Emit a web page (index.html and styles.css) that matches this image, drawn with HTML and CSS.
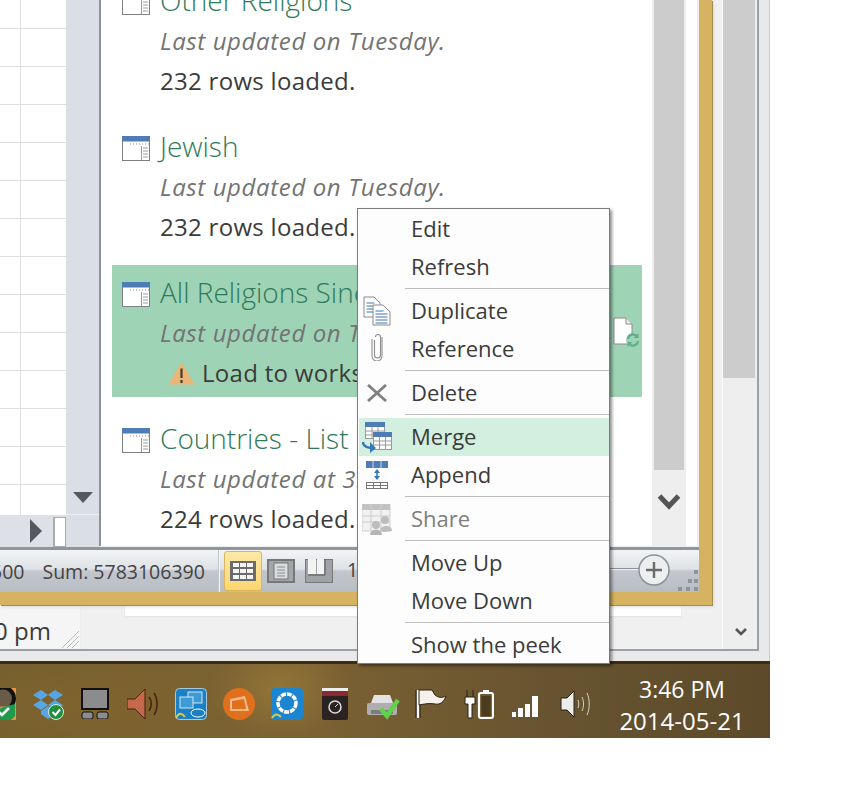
FILE: index.html
```html
<!DOCTYPE html>
<html lang="en">
<head>
<meta charset="utf-8">
<title>Queries</title>
<link rel="stylesheet" href="styles.css">
</head>
<body>
<svg class="defs" width="0" height="0" aria-hidden="true">
  <defs>
    <symbol id="tbl" viewBox="0 0 28 25">
      <rect x=".5" y=".5" width="27" height="24" fill="#fff" stroke="#7f7f7f"/>
      <rect width="28" height="5.5" fill="#4f7cb5"/>
      <path d="M8 8h1m2 0h1m2 0h1m2 0h1m2 0h1m2 0h1m2 0h1" stroke="#8a8a8a" fill="none"/>
      <path d="M19.5 10v14M21 12h5M21 15h5M21 18h5M21 21h5" stroke="#9a9a9a" fill="none"/>
    </symbol>
  </defs>
</svg>
<div class="screen">
  <div class="workspace">
    <div class="back-window">
      <div class="doc">
        <div class="doc-foot">
          <div class="doc-left">
            <span class="doc-time">0 pm</span>
            <svg class="grip-lines" width="19" height="18" viewBox="0 0 19 18"><path d="M1 18 18 1M6 18 18 6M11 18 18 11" stroke="#b9b9b9" fill="none"/></svg>
          </div>
          <div class="paper"></div>
        </div>
      </div>
      <div class="back-scroll">
        <div class="back-thumb"></div>
        <svg class="back-chev" width="14" height="10" viewBox="0 0 14 10"><path d="M2 2l5 5 5-5" stroke="#555" stroke-width="2.6" fill="none"/></svg>
      </div>
    </div>
    <div class="front-window">
      <div class="content">
        <div class="left">
          <div class="left-top">
            <div class="grid"></div>
            <div class="vscroll"><div class="tri-down"></div></div>
          </div>
          <div class="hscroll"><div class="tri-right"></div><div class="hthumb"></div><div class="corner"></div></div>
        </div>
        <div class="pane">
          <div class="list">
            <div class="item">
              <div class="title"><svg class="tbl"><use href="#tbl"/></svg>Other Religions</div>
              <div class="sub">Last updated on Tuesday.</div>
              <div class="rows">232 rows loaded.</div>
            </div>
            <div class="item">
              <div class="title"><svg class="tbl"><use href="#tbl"/></svg>Jewish</div>
              <div class="sub">Last updated on Tuesday.</div>
              <div class="rows">232 rows loaded.</div>
            </div>
            <div class="item selected">
              <div class="title"><svg class="tbl"><use href="#tbl"/></svg>All Religions Since 1945</div>
              <div class="sub">Last updated on Tuesday.</div>
              <div class="rows warn">
                <svg class="warn-icon" width="27" height="24" viewBox="0 0 27 24"><path d="M13.5 1 26.5 23.5H.5z" fill="#e9b676"/><path d="M13.5 7.5v9.5M13.5 19v3" stroke="#4a3a28" stroke-width="2.2"/></svg>
                Load to worksheet
              </div>
              <svg class="file-icon" width="28" height="30" viewBox="0 0 28 30">
                <path d="M1 1h12l6 6v20H1z" fill="#fff" stroke="#8a8a8a"/>
                <path d="M13 1v6h6" fill="#f2f2f2" stroke="#8a8a8a"/>
                <circle cx="20" cy="23" r="7" fill="#9fd3b6"/>
                <path d="M15 22a5 5 0 0 1 9-2.500M25 24a5 5 0 0 1-9 2.500" stroke="#5fae8c" stroke-width="2.200" fill="none"/>
                <path d="M25.500 16v5h-5zM14.500 30v-5h5z" fill="#5fae8c"/>
              </svg>
            </div>
            <div class="item">
              <div class="title"><svg class="tbl"><use href="#tbl"/></svg>Countries - List</div>
              <div class="sub">Last updated at 3:46 PM.</div>
              <div class="rows">224 rows loaded.</div>
            </div>
          </div>
          <div class="pane-scroll">
            <div class="pane-thumb"></div>
            <svg class="pane-chev" width="24" height="20" viewBox="0 0 24 20"><path d="M2.500 3 12 13 21.500 3" stroke="#555" stroke-width="5" fill="none"/></svg>
          </div>
          <div class="pane-edge"></div>
        </div>
      </div>
      <div class="statusbar">
        <span class="st-avg">500</span>
        <span class="st-sum">Sum: 5783106390</span>
        <span class="st-div"></span>
        <span class="view active">
          <svg width="26" height="20" viewBox="0 0 26 20"><rect width="26" height="20" fill="#6b6b6b"/><path d="M3 2h6v4H3zM10 2h6v4h-6zM17 2h6v4h-6zM3 8h6v4H3zM10 8h6v4h-6zM17 8h6v4h-6zM3 14h6v4H3zM10 14h6v4h-6zM17 14h6v4h-6z" fill="#f4f4f4"/></svg>
        </span>
        <span class="view">
          <svg width="28" height="24" viewBox="0 0 28 24"><rect x="1" y="1" width="26" height="22" fill="#a2a6ab" stroke="#777" stroke-width="2"/><rect x="7" y="4" width="14" height="16" fill="#d9dce0" stroke="#777"/><path d="M10 8h8M10 11h8M10 14h8M10 17h8" stroke="#8b8b8b"/></svg>
        </span>
        <span class="view">
          <svg width="28" height="24" viewBox="0 0 28 24"><rect x=".5" y=".5" width="27" height="23" fill="#9fa3a8" stroke="#777"/><rect x="3" y="0" width="8" height="15" fill="#f3f3f3"/><rect x="12" y="0" width="7" height="15" fill="#f3f3f3"/><path d="M3 16h17V0" fill="none" stroke="#555"/></svg>
        </span>
        <span class="st-zoom">100%</span>
        <span class="zoom-line"></span>
        <span class="zoom-plus">
          <svg width="32" height="32" viewBox="0 0 32 32"><circle cx="16" cy="16" r="15" fill="#eceef0" stroke="#8d9298" stroke-width="1.500"/><path d="M16 8v16M8 16h16" stroke="#6b6b6b" stroke-width="2.400"/></svg>
        </span>
        <svg class="st-grip" width="22" height="22" viewBox="0 0 22 22"><path d="M17 0h4v4h-4zM11 9h4v4h-4zM17 9h4v4h-4zM1 17h4v4H1zM9 17h4v4H9zM17 17h4v4h-4z" fill="#8e949b"/></svg>
      </div>
    </div>
    <div class="menu">
      <div class="mi"><span class="mi-ic"></span><span class="mi-t">Edit</span></div>
      <div class="mi"><span class="mi-ic"></span><span class="mi-t">Refresh</span></div>
      <div class="sep"></div>
      <div class="mi"><span class="mi-ic">
        <svg width="28" height="30" viewBox="0 0 28 30"><path d="M1 1h10l6 6v14H1z" fill="#fff" stroke="#8a8a8a"/><path d="M3.500 7h8M3.500 10h10M3.500 13h10M3.500 16h10" stroke="#3f74ad"/><path d="M10 9h10l7 7v13H10z" fill="#fff" stroke="#8a8a8a"/><path d="M12.500 15h8M12.500 18h12M12.500 21h12M12.500 24h12M12.500 27h12" stroke="#3f74ad"/></svg>
      </span><span class="mi-t">Duplicate</span></div>
      <div class="mi"><span class="mi-ic mi-up">
        <svg width="12" height="28" viewBox="0 0 12 28"><path d="M3.500 7v15a3 3 0 0 0 6 0V4a2.500 2.500 0 0 0-5 0M1 6v17a5 5 0 0 0 10 0V4" stroke="#8e8e8e" stroke-width="1.100" fill="none"/></svg>
      </span><span class="mi-t">Reference</span></div>
      <div class="sep"></div>
      <div class="mi"><span class="mi-ic">
        <svg width="20" height="18" viewBox="0 0 20 18"><path d="M1 1l18 16M19 1 1 17" stroke="#808080" stroke-width="2.800" fill="none"/></svg>
      </span><span class="mi-t">Delete</span></div>
      <div class="sep"></div>
      <div class="mi hot"><span class="mi-ic">
        <svg width="30" height="31" viewBox="0 0 30 31"><g stroke="#9a9a9a" fill="#fff"><rect x="3.500" y=".5" width="19" height="16"/><path d="M3.500 9h19M3.500 13h19M10 5v12M16 5v12" fill="none"/><rect x="11.500" y="10.500" width="18" height="17"/><path d="M11.500 19h18M11.500 23h18M17.500 15v12M23.500 15v12" fill="none"/></g><rect x="3" width="20" height="5" fill="#4f7cb5"/><rect x="11" y="10" width="19" height="5" fill="#4f7cb5"/><path d="M1 20c0 5 4 6 10 6" stroke="#3878b4" stroke-width="2.400" fill="none"/><path d="M8 20l6 6-6 5z" fill="#3878b4"/></svg>
      </span><span class="mi-t">Merge</span></div>
      <div class="mi"><span class="mi-ic">
        <svg width="22" height="28" viewBox="0 0 22 28"><rect width="22" height="7" fill="#4f7cb5"/><path d="M7 0v7M15 0v7" stroke="#fff" stroke-width=".7"/><rect x=".5" y="21.500" width="21" height="6" fill="#fff" stroke="#777"/><path d="M0 24.500h22M7.500 21v7M14.500 21v7" stroke="#777"/><path d="M11 9v9" stroke="#3878b4" stroke-width="1.600"/><path d="M8 12l3-4 3 4zM8 15l3 4 3-4z" fill="#3878b4"/></svg>
      </span><span class="mi-t">Append</span></div>
      <div class="sep"></div>
      <div class="mi off"><span class="mi-ic">
        <svg width="30" height="31" viewBox="0 0 30 31"><rect width="28" height="27" fill="#f1f1f1" stroke="#d0d0d0"/><rect width="28" height="6" fill="#c2c2c2"/><path d="M0 12h28M0 18h28M9 0v27M19 0v27" stroke="#cdcdcd"/><circle cx="23" cy="16" r="4" fill="#bdbdbd"/><circle cx="14" cy="21" r="4" fill="#bdbdbd"/><path d="M8 31c0-7 12-7 12 0z" fill="#b5b5b5"/><path d="M18 26c1-5 12-6 12 1l-9 1z" fill="#bdbdbd"/></svg>
      </span><span class="mi-t">Share</span></div>
      <div class="sep"></div>
      <div class="mi"><span class="mi-ic"></span><span class="mi-t">Move Up</span></div>
      <div class="mi"><span class="mi-ic"></span><span class="mi-t">Move Down</span></div>
      <div class="sep"></div>
      <div class="mi"><span class="mi-ic"></span><span class="mi-t">Show the peek</span></div>
    </div>
  </div>
  <div class="taskbar">
    <div class="tray">
      <svg class="t0" width="16" height="32" viewBox="0 0 16 32"><rect x="-4" width="20" height="32" fill="#e8953a"/><path d="M-4 19a11 11 0 1 1 15-1" stroke="#111" stroke-width="4" fill="#6a5a48"/><path d="M-4 32V22l8-3 11-3v12l-4 4z" fill="#1f9a4d"/><path d="M-1 24l3 3 7-7" stroke="#fff" stroke-width="2.500" fill="none"/></svg>
      <svg class="t1" width="32" height="30" viewBox="0 0 32 30"><path d="M9 0l7 5-7 5-8-5zM23 0l8 5-8 5-7-5zM1 15l8-5 7 5-7 5zM31 15l-8-5-7 5 7 5zM9 21l7-5 7 5v3l-7 5-7-5z" fill="#58a5e3"/><circle cx="24" cy="22" r="7.500" fill="#1f8f3f" stroke="#d8efdd"/><path d="M20.500 22l3 3 4.500-5.500" stroke="#fff" stroke-width="2" fill="none"/></svg>
      <svg class="t2" width="28" height="31" viewBox="0 0 28 31"><rect x="1" y="1" width="26" height="20" fill="#8c8c8c" stroke="#111" stroke-width="2"/><rect x="1" y="24" width="11" height="7" rx="2" fill="#8c8c8c" stroke="#111"/><rect x="16" y="24" width="11" height="7" rx="2" fill="#8c8c8c" stroke="#111"/></svg>
      <svg class="t3" width="31" height="32" viewBox="0 0 31 32"><path d="M0 11h8L18 1v30L8 21H0z" fill="#c4694a" stroke="#45200f"/><path d="M22 9c3 4 3 10 0 14M27 5c4 6 4 16 0 22" stroke="#4a2410" stroke-width="1.600" fill="none"/></svg>
      <svg class="t4" width="32" height="32" viewBox="0 0 32 32"><rect x=".5" y=".5" width="31" height="31" rx="4" fill="#1b80c4" stroke="#a8c8dc"/><rect x="13" y="4" width="14" height="11" fill="#3d9ad4" stroke="#cfe6f3"/><rect x="5" y="9" width="13" height="11" fill="#3d9ad4" stroke="#cfe6f3"/><path d="M1 30c3-6 6-5 9-1" stroke="#e7c83c" stroke-width="2" fill="none"/><ellipse cx="23" cy="25" rx="7" ry="4" fill="none" stroke="#fff"/></svg>
      <svg class="t5" width="32" height="32" viewBox="0 0 32 32"><circle cx="16" cy="16" r="16" fill="#e0701c"/><path d="M7 11l15-3 4 15H7z" fill="#f4b98b"/><path d="M9 13l12-2 2 10H9z" fill="#e0701c"/></svg>
      <svg class="t6" width="32" height="32" viewBox="0 0 32 32"><rect width="32" height="32" rx="4" fill="#1b86cf"/><circle cx="16" cy="15" r="9" fill="none" stroke="#fff" stroke-width="3.500" stroke-dasharray="5 1"/><path d="M1 30c3-5 6-4 9-1" stroke="#d9c84a" stroke-width="2" fill="none"/></svg>
      <svg class="t7" width="26" height="32" viewBox="0 0 26 32"><rect width="26" height="32" rx="2" fill="#2b2222"/><rect width="26" height="3" fill="#eee"/><rect y="3" width="26" height="5" fill="#8a2a34"/><circle cx="13" cy="19" r="6" fill="none" stroke="#ddd" stroke-width="1.500"/><path d="M13 19l3-3" stroke="#ddd"/></svg>
      <svg class="t8" width="33" height="26" viewBox="0 0 33 26"><path d="M7 0h16l3 8H4z" fill="#e2e2e2"/><rect y="8" width="30" height="12" rx="2" fill="#aeaeae"/><rect x="4" y="15" width="22" height="4" fill="#7c7c7c"/><path d="M14 14l6 7 11-16" stroke="#5fd24a" stroke-width="4.500" fill="none"/></svg>
      <svg class="t9" width="32" height="30" viewBox="0 0 32 30"><path d="M3 1v28" stroke="#2a2112" stroke-width="5"/><path d="M3 1v28" stroke="#fff" stroke-width="2.500"/><path d="M4 1h13l3 5c4 3 7 3 11 1-2 6-6 9-11 8-5-1-11 0-16 1z" fill="#f4f1ea" stroke="#2a2112"/></svg>
      <svg class="t10" width="30" height="30" viewBox="0 0 30 30"><path d="M3 1v7M9 1v7M1 8h10v7H8v14H4V15H1z" fill="#fff" stroke="#2a2112" stroke-width="1"/><rect x="15" y="4" width="14" height="25" rx="2" fill="none" stroke="#fff" stroke-width="2.200"/><rect x="19" y="1" width="6" height="3" fill="#fff"/><rect x="17.500" y="7" width="9" height="20" fill="#4c3c1e"/></svg>
      <svg class="t11" width="31" height="22" viewBox="0 0 31 22"><path d="M1 17h4v5H1zM7 13h5v9H7zM14 9h5v13h-5zM21 1h6v21h-6z" fill="#fff"/></svg>
      <svg class="t12" width="32" height="30" viewBox="0 0 32 30"><path d="M1 9h6L14 2v26l-7-7H1z" fill="#ededed" stroke="#2a2112"/><path d="M18 11c1 2 1 6 0 8M22 8c2 4 2 10 0 14M27 4c3 7 3 15 0 22" stroke="#d8d3c6" fill="none"/></svg>
    </div>
    <div class="clock"><div class="clock-time">3:46 PM</div><div class="clock-date">2014-05-21</div></div>
  </div>
</div>
</body>
</html>
```

FILE: styles.css
```css
* { box-sizing: border-box; }
html, body { margin: 0; padding: 0; background: #fff; }
body { width: 841px; height: 802px; overflow: hidden; font-family: "Open Sans", "Liberation Sans", sans-serif; color: #3b3b3b; }
.defs { position: absolute; }
.screen { width: 770px; height: 738px; display: flex; flex-direction: column; position: relative; }

.workspace { height: 661px; background: #e9e9e9; border-right: 1px solid #ccc; position: relative; flex: none; }
.back-window { width: 759px; height: 651px; display: flex; border-right: 2px solid #9aa0a8; border-bottom: 2px solid #9aa0a8; }
.doc { width: 723px; padding-top: 605px; background: #f0f0f0; border-right: 1px solid #fff; }
.doc-foot { display: flex; height: 44px; }
.doc-left { width: 81px; background: #f5f5f5; position: relative; overflow: hidden; border-right: 1px solid #ececec; }
.doc-time { position: absolute; left: -6px; top: 11px; font-size: 24px; line-height: 30px; white-space: nowrap; }
.grip-lines { position: absolute; right: 0; bottom: 1px; }
.paper { width: 556px; height: 11px; margin-left: 44px; background: #fff; box-shadow: 0 1px 2px #e2e2e2; }
.back-scroll { width: 34px; background: #eee; position: relative; }
.back-thumb { width: 32px; height: 378px; background: #ccc; margin-left: 0; }
.back-chev { position: absolute; left: 11px; top: 627px; }

.front-window { position: absolute; left: 0; top: 0; width: 712px; height: 605px; border-right: 13px solid #d5b360; border-bottom: 13px solid #d5b360; box-shadow: 1px 1px 0 #a68b4c, 2px 2px 3px #ddd; display: flex; flex-direction: column; }
.content { height: 547px; display: flex; flex: none; }
.left { width: 99px; flex: none; display: flex; flex-direction: column; }
.left-top { flex: 1; display: flex; min-height: 0; }
.grid { flex: 1; background-color: #fff; background-image: linear-gradient(#dedede, #dedede), linear-gradient(to bottom, transparent 27px, #dedede 27px, #dedede 28px, transparent 28px); background-size: 1px 100%, 100% 38px; background-position: 20px 0, 0 1px; background-repeat: no-repeat, repeat-y; }
.vscroll { width: 33px; background: #dadfe6; border-bottom: 1px solid #eef0f3; display: flex; justify-content: center; align-items: flex-end; padding-bottom: 11px; }
.tri-down { width: 0; height: 0; border-left: 10px solid transparent; border-right: 10px solid transparent; border-top: 11px solid #55585c; }
.hscroll { height: 32px; flex: none; background: #dde1e7; display: flex; align-items: center; padding-left: 30px; }
.tri-right { width: 0; height: 0; border-top: 12px solid transparent; border-bottom: 12px solid transparent; border-left: 12px solid #55585c; }
.hthumb { width: 13px; height: 30px; margin-left: 11px; background: #fff; border: 1px solid #a8acb2; border-left-width: 2px; align-self: flex-end; }
.corner { flex: 1; align-self: stretch; background: #dadfe6; }

.pane { flex: 1; display: flex; background: #fff; border-left: 2px solid #8d9298; min-width: 0; height: 546px; }
.list { width: 551px; flex: none; padding: 0 10px 0 11px; overflow: hidden; }
.item { height: 132px; margin-bottom: 14px; position: relative; padding: 9px 0 0 48px; overflow: hidden; }
.item:first-child { margin-top: -27px; }
.item.selected { background: #9fd3b6; }
.title { font-size: 28px; font-weight: 300; line-height: 36px; color: #2f7a5b; white-space: nowrap; position: relative; }
.tbl { position: absolute; left: -38px; top: 8px; width: 28px; height: 25px; }
.sub { font-size: 24px; font-style: italic; line-height: 30px; margin-top: 8px; color: #737373; white-space: nowrap; letter-spacing: .62px; }
.rows { font-size: 24px; line-height: 30px; margin-top: 10px; white-space: nowrap; color: #3b3b3b; letter-spacing: .3px; }
.warn { display: flex; align-items: center; gap: 7px; margin-left: 8px; }
.warn-icon { flex: none; }
.file-icon { position: absolute; left: 501px; top: 52px; }
.pane-scroll { width: 34px; flex: none; background: #eee; position: relative; }
.pane-thumb { width: 30px; height: 470px; margin-left: 2px; background: #ccc; }
.pane-chev { position: absolute; left: 5px; top: 493px; }
.pane-edge { flex: 1; background: #fff; border-right: 2px solid #eee; }

.statusbar { flex: 1; display: flex; align-items: center; position: relative; overflow: hidden; font-size: 19.5px; background: linear-gradient(#f2f4f6 0, #dfe2e6 45%, #c3c7cd 50%, #b9bdc4 100%); border-top: 3px solid #8f969e; color: #444; }
.st-avg { margin-left: -9px; }
.st-sum { margin-left: 18px; white-space: nowrap; }
.st-div { width: 2px; height: 100%; margin-left: 13px; margin-right: 4px; background: #c2c6cc; border-right: 1px solid #f5f5f5; }
.view { width: 38px; height: 40px; display: flex; align-items: center; justify-content: center; flex: none; }
.view.active { background: linear-gradient(#fde9a8, #fdd66f); border: 1px solid #dcb65a; border-radius: 3px; }
.st-zoom { position: absolute; left: 347px; top: 6px; }
.zoom-line { position: absolute; left: 600px; top: 18px; width: 40px; height: 2px; background: #8d9298; border-bottom: 1px solid #eee; }
.zoom-plus { position: absolute; left: 638px; top: 4px; height: 32px; }
.st-grip { position: absolute; right: 0; bottom: 0; }

.menu { position: absolute; left: 357px; top: 208px; width: 253px; height: 456px; padding: 1px 1px 0 1px; background: #fdfdfd; border: 1px solid #7d7d7d; box-shadow: 2px 2px 3px rgba(0,0,0,.45); font-size: 22px; color: #3b3b3b; }
.mi { height: 38px; display: flex; align-items: center; width: 250px; white-space: nowrap; }
.mi-t { position: relative; top: -1px; }
.mi-ic { width: 36px; margin-right: 16px; height: 38px; display: flex; align-items: center; justify-content: center; flex: none; }
.mi-up { padding-bottom: 4px; }
.mi.hot { background: #d3efdf; }
.mi.off { color: #7d7d7d; }
.sep { height: 6px; margin-left: 46px; width: 204px; background: linear-gradient(#bdbdbd, #bdbdbd) 0 2px / 100% 1px no-repeat; }

.taskbar { flex: 1; display: flex; align-items: stretch; color: #fff; background: radial-gradient(ellipse 70px 50px at 280px 25px, rgba(170,135,60,.5), transparent), radial-gradient(ellipse 150px 40px at 90px 40px, rgba(140,105,40,.35), transparent), linear-gradient(90deg, #77602f 0, #7c6233 40%, #685430 70%, #5c4a2a 100%); border-top: 3px solid #3b2e12; }
.tray { width: 600px; position: relative; }
.tray svg { position: absolute; }
.t0 { left: 0; top: 24px; } .t1 { left: 32px; top: 26px; } .t2 { left: 81px; top: 24px; } .t3 { left: 127px; top: 24px; }
.t4 { left: 175px; top: 24px; } .t5 { left: 223px; top: 24px; } .t6 { left: 271px; top: 24px; } .t7 { left: 322px; top: 24px; }
.t8 { left: 367px; top: 31px; } .t9 { left: 415px; top: 25px; } .t10 { left: 464px; top: 25px; } .t11 { left: 511px; top: 31px; } .t12 { left: 560px; top: 25px; }
.clock { flex: 1; text-align: center; line-height: 32px; padding: 9px 6px 0 0; }
.clock-time { font-size: 23px; }
.clock-date { font-size: 24px; }
```
